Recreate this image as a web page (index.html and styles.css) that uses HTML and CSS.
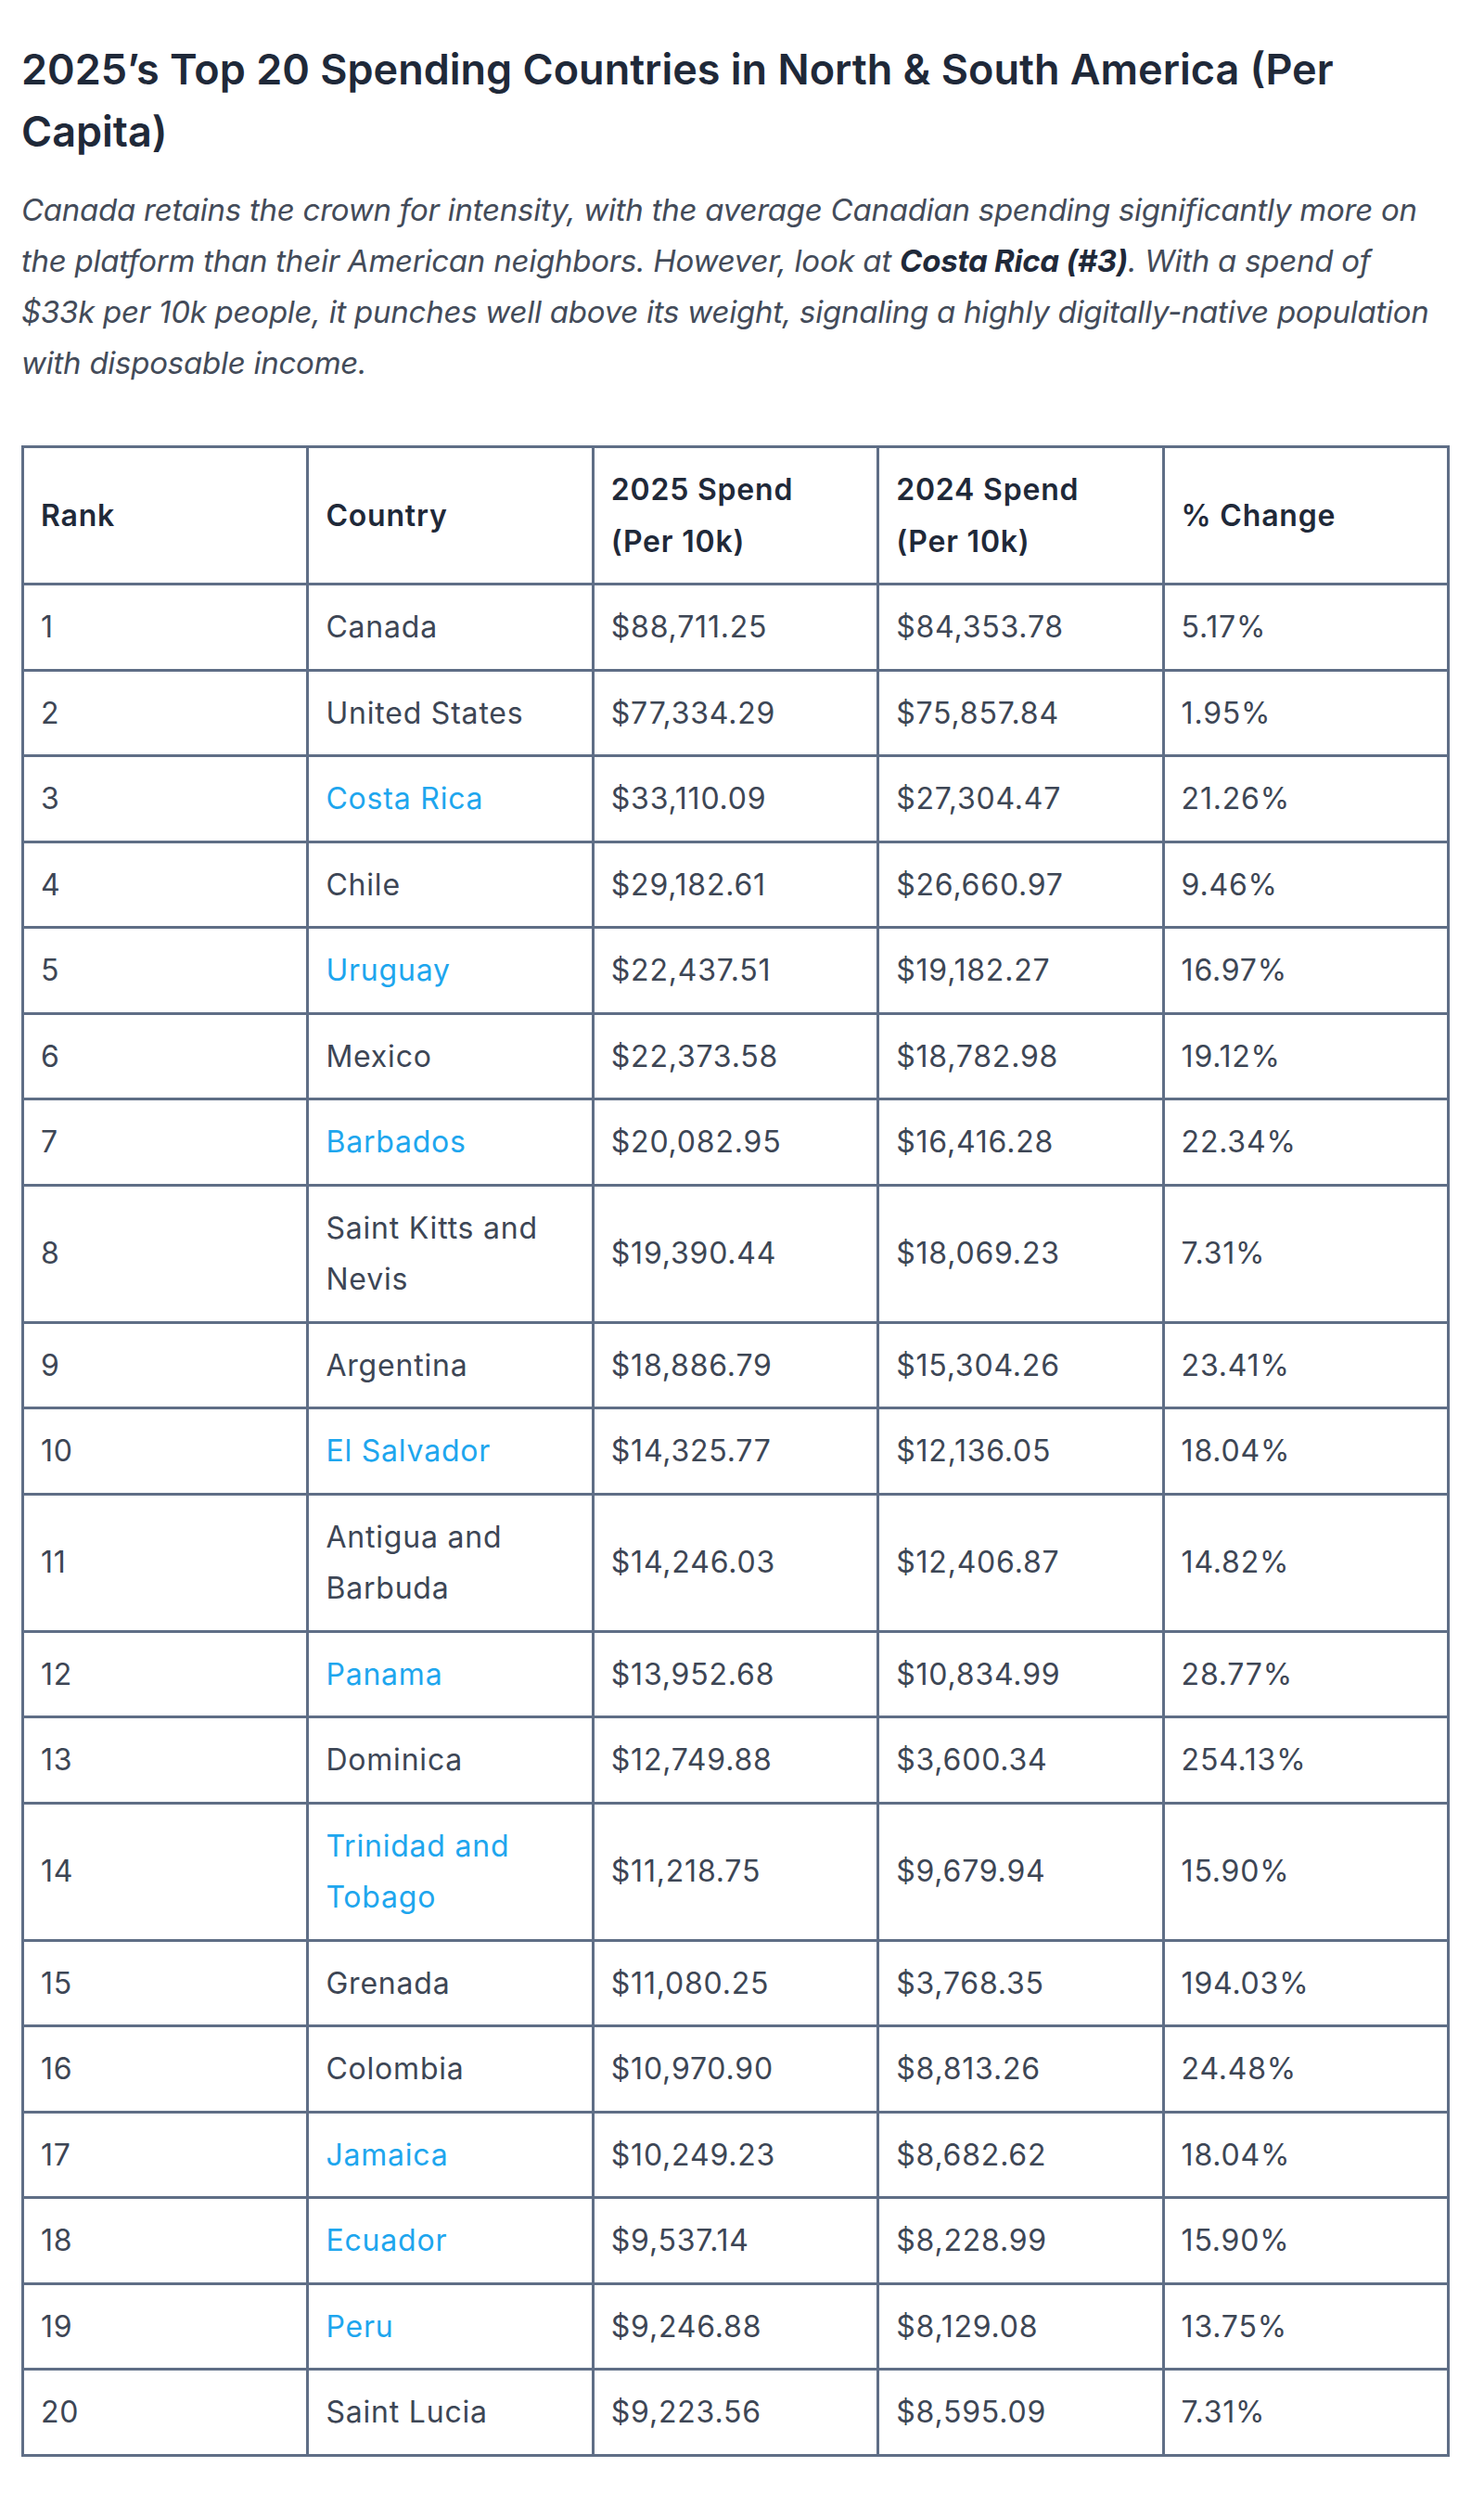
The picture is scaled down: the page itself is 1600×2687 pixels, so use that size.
FILE: index.html
```html
<!DOCTYPE html>
<html lang="en">
<head>
<meta charset="utf-8">
<title>2025's Top 20 Spending Countries in North &amp; South America (Per Capita)</title>
<link rel="stylesheet" href="styles.css">
</head>
<body>
<main class="article">
  <h2 class="title">2025’s Top 20 Spending Countries in North &amp; South America (Per Capita)</h2>
  <p class="lead">Canada retains the crown for intensity, with the average Canadian spending significantly more on the platform than their American neighbors. However, look at <strong>Costa Rica (#3)</strong>. With a spend of $33k per 10k people, it punches well above its weight, signaling a highly digitally-native population with disposable income.</p>
  <table class="data">
    <thead>
      <tr><th>Rank</th><th>Country</th><th>2025 Spend (Per 10k)</th><th>2024 Spend (Per 10k)</th><th>% Change</th></tr>
    </thead>
    <tbody>
      <tr><td>1</td><td>Canada</td><td>$88,711.25</td><td>$84,353.78</td><td>5.17%</td></tr>
      <tr><td>2</td><td>United States</td><td>$77,334.29</td><td>$75,857.84</td><td>1.95%</td></tr>
      <tr><td>3</td><td><a href="#">Costa Rica</a></td><td>$33,110.09</td><td>$27,304.47</td><td>21.26%</td></tr>
      <tr><td>4</td><td>Chile</td><td>$29,182.61</td><td>$26,660.97</td><td>9.46%</td></tr>
      <tr><td>5</td><td><a href="#">Uruguay</a></td><td>$22,437.51</td><td>$19,182.27</td><td>16.97%</td></tr>
      <tr><td>6</td><td>Mexico</td><td>$22,373.58</td><td>$18,782.98</td><td>19.12%</td></tr>
      <tr><td>7</td><td><a href="#">Barbados</a></td><td>$20,082.95</td><td>$16,416.28</td><td>22.34%</td></tr>
      <tr><td>8</td><td>Saint Kitts and Nevis</td><td>$19,390.44</td><td>$18,069.23</td><td>7.31%</td></tr>
      <tr><td>9</td><td>Argentina</td><td>$18,886.79</td><td>$15,304.26</td><td>23.41%</td></tr>
      <tr><td>10</td><td><a href="#">El Salvador</a></td><td>$14,325.77</td><td>$12,136.05</td><td>18.04%</td></tr>
      <tr><td>11</td><td>Antigua and Barbuda</td><td>$14,246.03</td><td>$12,406.87</td><td>14.82%</td></tr>
      <tr><td>12</td><td><a href="#">Panama</a></td><td>$13,952.68</td><td>$10,834.99</td><td>28.77%</td></tr>
      <tr><td>13</td><td>Dominica</td><td>$12,749.88</td><td>$3,600.34</td><td>254.13%</td></tr>
      <tr><td>14</td><td><a href="#">Trinidad and Tobago</a></td><td>$11,218.75</td><td>$9,679.94</td><td>15.90%</td></tr>
      <tr><td>15</td><td>Grenada</td><td>$11,080.25</td><td>$3,768.35</td><td>194.03%</td></tr>
      <tr><td>16</td><td>Colombia</td><td>$10,970.90</td><td>$8,813.26</td><td>24.48%</td></tr>
      <tr><td>17</td><td><a href="#">Jamaica</a></td><td>$10,249.23</td><td>$8,682.62</td><td>18.04%</td></tr>
      <tr><td>18</td><td><a href="#">Ecuador</a></td><td>$9,537.14</td><td>$8,228.99</td><td>15.90%</td></tr>
      <tr><td>19</td><td><a href="#">Peru</a></td><td>$9,246.88</td><td>$8,129.08</td><td>13.75%</td></tr>
      <tr><td>20</td><td>Saint Lucia</td><td>$9,223.56</td><td>$8,595.09</td><td>7.31%</td></tr>
    </tbody>
  </table>
</main>
</body>
</html>
```
FILE: styles.css
```css
html, body {
  margin: 0;
  padding: 0;
  background: #ffffff;
}

body {
  font-family: Inter, "Noto Sans", "Liberation Sans", sans-serif;
  color: #333c4b;
}

.article {
  width: 1540px;
  padding: 41px 0 40px 23px;
}

.title {
  margin: 0;
  font-size: 45px;
  line-height: 67px;
  font-weight: 600;
  letter-spacing: 0;
  color: #1f2939;
}

.lead {
  margin: 24px 0 61px;
  font-size: 33px;
  line-height: 55px;
  font-style: italic;
  letter-spacing: -0.25px;
  color: #434b59;
}

.lead strong {
  font-weight: 700;
  color: #1f2939;
}

.data {
  width: 1540px;
  border-collapse: collapse;
  table-layout: fixed;
  font-size: 32px;
  line-height: 55.5px;
  letter-spacing: 0.8px;
}

.data th,
.data td {
  border: 3px solid #5f6e86;
  padding: 17px 18px;
  text-align: left;
  vertical-align: middle;
}

.data th {
  font-weight: 600;
  color: #1f2939;
}

.data td {
  color: #3d4655;
}

.data a {
  color: #1ea6ee;
  text-decoration: none;
}
```
